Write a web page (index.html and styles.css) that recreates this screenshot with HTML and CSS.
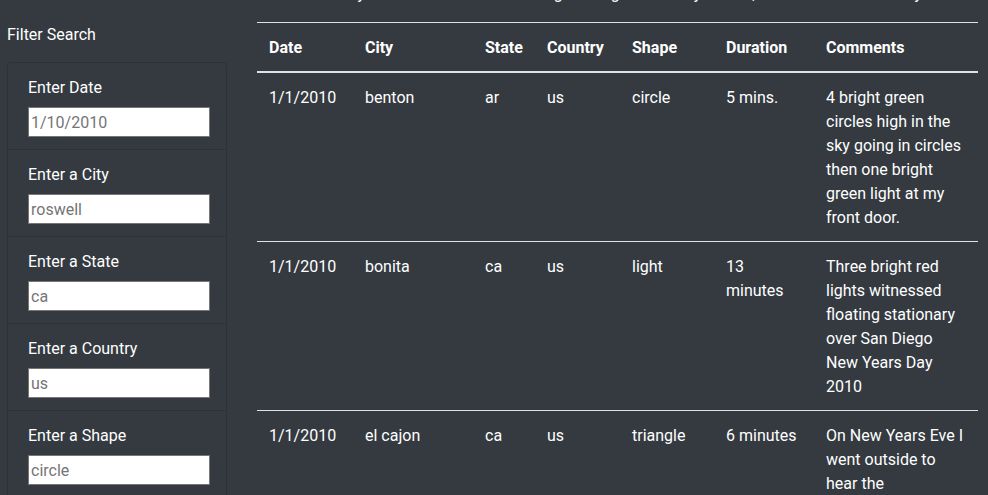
FILE: index.html
```html
<!DOCTYPE html>
<html lang="en">
<head>
<meta charset="utf-8">
<title>UFO Sightings</title>
<link rel="stylesheet" href="styles.css">
</head>
<body>
<div class="page">
  <aside class="sidebar">
    <p class="filter-title">Filter Search</p>
    <form class="card">
      <ul class="filters">
        <li class="filter-item">
          <label class="filter-label" for="datetime">Enter Date</label>
          <input class="filter-input" id="datetime" type="text" placeholder="1/10/2010">
        </li>
        <li class="filter-item">
          <label class="filter-label" for="city">Enter a City</label>
          <input class="filter-input" id="city" type="text" placeholder="roswell">
        </li>
        <li class="filter-item">
          <label class="filter-label" for="state">Enter a State</label>
          <input class="filter-input" id="state" type="text" placeholder="ca">
        </li>
        <li class="filter-item">
          <label class="filter-label" for="country">Enter a Country</label>
          <input class="filter-input" id="country" type="text" placeholder="us">
        </li>
        <li class="filter-item">
          <label class="filter-label" for="shape">Enter a Shape</label>
          <input class="filter-input" id="shape" type="text" placeholder="circle">
        </li>
      </ul>
    </form>
  </aside>
  <main class="content">
    <p class="intro">On that hot day the old town heard a strange hum grow loud by the hill, and then the whole sky shone.</p>
    <table class="sightings">
      <colgroup>
        <col class="c-date"><col class="c-city"><col class="c-state"><col class="c-country"><col class="c-shape"><col class="c-duration"><col class="c-comments">
      </colgroup>
      <thead>
        <tr><th>Date</th><th>City</th><th>State</th><th>Country</th><th>Shape</th><th>Duration</th><th>Comments</th></tr>
      </thead>
      <tbody>
        <tr><td>1/1/2010</td><td>benton</td><td>ar</td><td>us</td><td>circle</td><td>5 mins.</td><td>4 bright green circles high in the sky going in circles then one bright green light at my front door.</td></tr>
        <tr><td>1/1/2010</td><td>bonita</td><td>ca</td><td>us</td><td>light</td><td>13 minutes</td><td>Three bright red lights witnessed floating stationary over San Diego New Years Day 2010</td></tr>
        <tr><td>1/1/2010</td><td>el cajon</td><td>ca</td><td>us</td><td>triangle</td><td>6 minutes</td><td>On New Years Eve I went outside to hear the neighborhood fireworks and saw three lights in a triangle shape</td></tr>
      </tbody>
    </table>
  </main>
</div>
</body>
</html>
```
FILE: styles.css
```css
html, body {
  margin: 0;
  height: 100%;
  overflow: hidden;
}
body {
  background: #343a40;
  color: #fff;
  font-family: Roboto, "Liberation Sans", sans-serif;
  font-size: 16px;
  line-height: 24px;
}
.page {
  display: flex;
  padding: 0 10px 0 7px;
}
.sidebar {
  flex: none;
  width: 220px;
  padding-top: 23px;
}
.filter-title {
  margin: 0 0 15px;
}
.card {
  margin: 0;
  border: 1px solid rgba(0, 0, 0, 0.125);
  border-radius: 4px;
}
.filters {
  list-style: none;
  margin: 0;
  padding: 0;
}
.filter-item {
  padding: 12px 20px;
  border-bottom: 1px solid rgba(0, 0, 0, 0.125);
}
.filter-label {
  display: block;
  padding-top: 1px;
  margin-bottom: 7px;
}
.filter-input {
  display: block;
  box-sizing: border-box;
  width: 182px;
  height: 30px;
  margin: 0;
  padding: 1px 2px;
  border: 1px solid #767676;
  background: #fff;
  font: inherit;
  color: #495057;
}
.filter-input::placeholder {
  color: #757575;
}
.content {
  flex: none;
  width: 721px;
  margin-left: 30px;
}
.intro {
  margin: -18px 0 16px;
  white-space: nowrap;
  overflow: hidden;
}
.sightings {
  width: 721px;
  table-layout: fixed;
  border-collapse: collapse;
}
.c-date { width: 96px; }
.c-city { width: 120px; }
.c-state { width: 62px; }
.c-country { width: 85px; }
.c-shape { width: 94px; }
.c-duration { width: 100px; }
.c-comments { width: 164px; }
.sightings th,
.sightings td {
  padding: 13px 12px 11px;
  text-align: left;
  vertical-align: top;
  border-top: 1px solid #dee2e6;
}
.sightings th {
  font-weight: 700;
  border-bottom: 2px solid #dee2e6;
}
```
